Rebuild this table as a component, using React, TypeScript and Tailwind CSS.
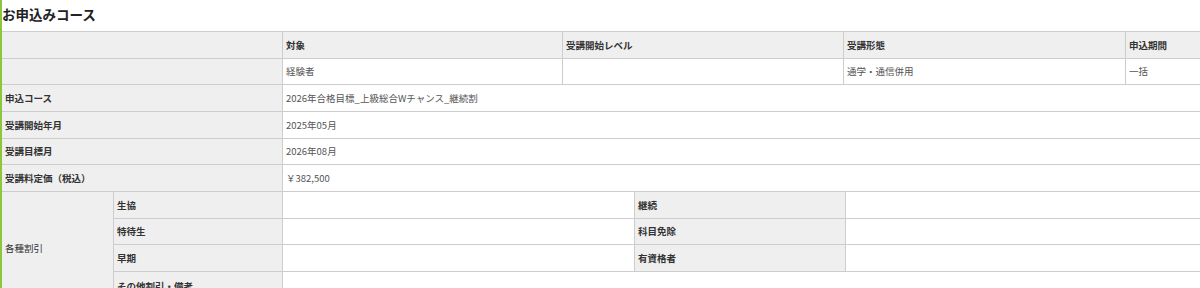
import React from "react";

const FONT = "[font-family:'Noto_Sans_CJK_JP','Noto_Sans',sans-serif]";

function Th({ children, className = "" }: { children?: React.ReactNode; className?: string }) {
  return (
    <div
      className={`flex items-center bg-[#efefef] border-b border-[#cdcdcd] pl-[3px] text-[9.5px] font-bold text-[#333] ${className}`}
    >
      {children}
    </div>
  );
}

function Td({ children, className = "" }: { children?: React.ReactNode; className?: string }) {
  return (
    <div
      className={`flex items-center bg-white border-b border-[#cdcdcd] pl-[3px] text-[9.5px] text-[#555] ${className}`}
    >
      {children}
    </div>
  );
}

export default function App() {
  return (
    <div className={`min-h-screen bg-white border-l-2 border-[#8cc63f] overflow-hidden ${FONT}`}>
      <h2 className="h-[31px] flex items-center text-[13.5px] font-bold text-[#222] leading-none pb-[1px]">
        お申込みコース
      </h2>

      {/* top table */}
      <div className="grid grid-cols-[280px_280px_281px_282px_1fr] auto-rows-[26.67px] border-t border-[#cdcdcd]">
        <Th className="pl-[2px]" />
        <Th className="border-l">対象</Th>
        <Th className="border-l">受講開始レベル</Th>
        <Th className="border-l">受講形態</Th>
        <Th className="border-l">申込期間</Th>

        <Th className="pl-[2px]" />
        <Td className="border-l">経験者</Td>
        <Td className="border-l" />
        <Td className="border-l">通学・通信併用</Td>
        <Td className="border-l">一括</Td>

        <Th className="pl-[2px]">申込コース</Th>
        <Td className="border-l col-span-4">2026年合格目標_上級総合Wチャンス_継続割</Td>

        <Th className="pl-[2px]">受講開始年月</Th>
        <Td className="border-l col-span-4">2025年05月</Td>

        <Th className="pl-[2px]">受講目標月</Th>
        <Td className="border-l col-span-4">2026年08月</Td>

        <Th className="pl-[2px]">受講料定価（税込）</Th>
        <Td className="border-l col-span-4">￥382,500</Td>
      </div>

      {/* discounts table */}
      <div className="grid grid-cols-[111px_169px_352px_211px_1fr] grid-rows-[26.67px_26.67px_26.67px_34px]">
        <Th className="pl-[2px] row-span-4 font-normal text-[#333]">各種割引</Th>

        <Th className="border-l">生協</Th>
        <Td className="border-l" />
        <Th className="border-l">継続</Th>
        <Td className="border-l" />

        <Th className="border-l">特待生</Th>
        <Td className="border-l" />
        <Th className="border-l">科目免除</Th>
        <Td className="border-l" />

        <Th className="border-l">早期</Th>
        <Td className="border-l" />
        <Th className="border-l">有資格者</Th>
        <Td className="border-l" />

        <Th className="border-l !items-start pt-[7px]">その他割引・備考</Th>
        <Td className="border-l col-span-3" />
      </div>
    </div>
  );
}
